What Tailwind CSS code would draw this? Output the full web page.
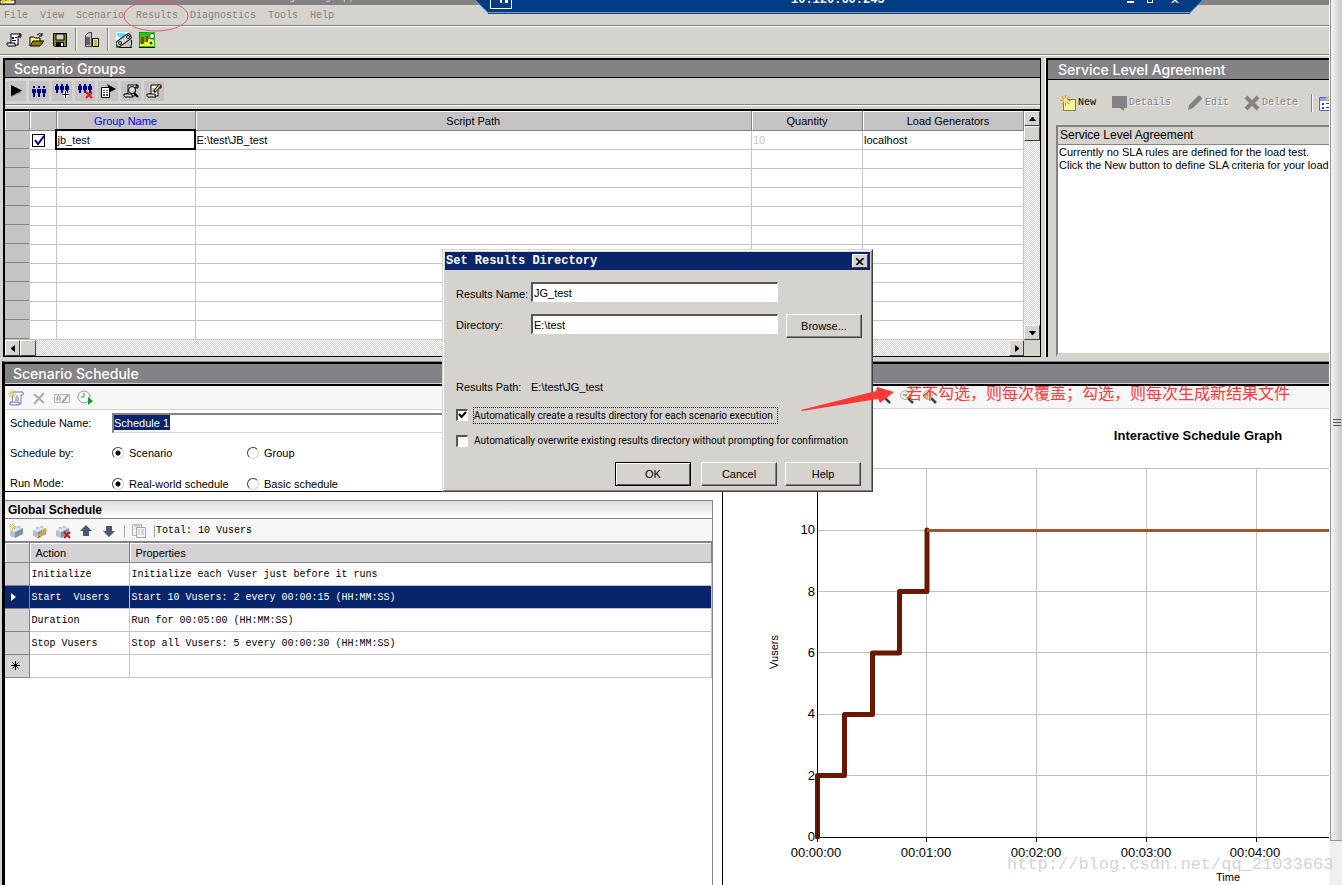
<!DOCTYPE html>
<html lang="en">
<head>
<meta charset="utf-8">
<title>Controller - Set Results Directory</title>
<script src="https://cdn.jsdelivr.net/npm/@tailwindcss/browser@4"></script>
</head>
<body class="h-screen overflow-hidden bg-[#d6d3ce] font-['Liberation_Sans',sans-serif] text-[11px] leading-4 text-black">
<svg class="hidden" aria-hidden="true">
  <symbol id="men" viewBox="0 0 16 16"><path d="M2 3h2v2H2zM1 6h4v4H4v4H2v-4H1zM7 3h2v2H7zM6 6h4v4H9v4H7v-4H6zM12 3h2v2h-2zM11 6h4v4h-1v4h-2v-4h-1z" fill="#000084"/></symbol>
  <symbol id="men-small" viewBox="0 0 16 16"><path d="M2 1h2v2H2zM1 3h4v4H4v3H2V7H1zM7 1h2v2H7zM6 3h4v4H9v3H7V7H6zM12 1h2v2h-2zM11 3h4v4h-1v3h-2V7h-1z" fill="#000084"/></symbol>
  <symbol id="scroll" viewBox="0 0 16 16"><path d="M5 2h9v2h-2v9H3V11h2z" fill="#fff" stroke="#000"/><path d="M1 11h8v2l1 1H2l-1-1z" fill="#dedede" stroke="#000"/><path d="M13 2h2v3h-2" fill="none" stroke="#000"/></symbol>
  <symbol id="block" viewBox="0 0 16 16"><path d="M1 7l8-4 5 2-8 4z" fill="#dfe6ee"/><path d="M1 7l5 2v6l-5-2z" fill="#b5c0ce"/><path d="M6 9l8-4v6l-8 4z" fill="#8493ab"/><ellipse cx="5.500" cy="5" rx="2" ry="1.200" fill="#c4cedb"/><ellipse cx="9.500" cy="4" rx="2" ry="1.200" fill="#c4cedb"/></symbol>
  <symbol id="spark" viewBox="0 0 10 10"><path d="M5 0v10M0 5h10M1.500 1.500l7 7M8.500 1.500l-7 7" stroke="#d99c2b"/><circle cx="5" cy="5" r="2" fill="#ffe27a"/></symbol>
  <symbol id="glass" viewBox="0 0 16 16"><path d="M9 9l5 5" stroke="#39424f" stroke-width="2.500"/><circle cx="6" cy="6" r="4.500" fill="#f3efd7" stroke="#a9adb3"/></symbol>
</svg>

<div class="relative flex h-full overflow-hidden">
  <main class="flex min-w-0 flex-1 flex-col overflow-hidden">
    <div class="flex h-[5px] shrink-0 items-end overflow-hidden bg-[#848284] text-[#d6d3ce]">
      <svg class="h-[5px] w-4" viewBox="0 0 16 5"><path d="M0 0h15v4H0z" fill="#fff" stroke="#000"/><path d="M2 0h3v3H2zM7 0h4v2H7z" fill="#f0d800"/></svg>
      <span class="ml-[273px] h-3 font-['Liberation_Mono',monospace] text-[10px] leading-[10px] whitespace-pre">g     g  p,</span>
    </div>

    <nav class="flex h-[22px] shrink-0 gap-3 border-b border-white pl-1 font-['Liberation_Mono',monospace] text-[10px] leading-[21px] text-[#848284] shadow-[inset_0_-1px_0_#848284]">
      <button>File</button><button>View</button><button>Scenario</button><button>Results</button><button>Diagnostics</button><button>Tools</button><button>Help</button>
    </nav>

    <div class="flex h-7 shrink-0 items-center gap-[7px] border-b border-[#848284] pb-[2px] pl-[6px] shadow-[0_1px_0_#fff]" role="toolbar" aria-label="File tools">
      <button aria-label="New scenario"><svg class="size-4" viewBox="0 0 16 16"><use href="#scroll"/><path d="M6 5h2v2H6zM9 5h2v1H9zM6 8h4v1H6z" fill="#000084"/></svg></button>
      <button aria-label="Open"><svg class="size-4" viewBox="0 0 16 16"><path d="M1 14V5h4l1 1h5v3" fill="#ffff84" stroke="#000"/><path d="M1 14l3-5h11l-4 5z" fill="#848200" stroke="#000"/><path d="M8 3q3-3 5 0m0-2v3h-3" fill="none" stroke="#000"/></svg></button>
      <button aria-label="Save"><svg class="size-4" viewBox="0 0 16 16"><path d="M1.500 1.500h13v13h-12l-1-1z" fill="#848200" stroke="#000"/><path d="M4 2h8v6H4z" fill="#d6d3ce" stroke="#000"/><path d="M4 10h8v4H4z" fill="#000"/><path d="M9 11h2v3H9z" fill="#fff"/></svg></button>
      <span class="h-[23px] w-[2px] border-r border-[#fff] bg-[#848284]"></span>
      <button aria-label="Load generators"><svg class="size-4" viewBox="0 0 16 16"><path d="M1.500 3.500l3-3h3v14h-6z" fill="#c6c3c6" stroke="#424142"/><path d="M2 6h4M2 8h4M2 10h4M2 12h4" stroke="#000"/><path d="M8.500 6.500h6v8h-6z" fill="#ffff30" stroke="#000"/><path d="M10 9h3M10 11h3M10 13h3" stroke="#848200"/></svg></button>
      <span class="h-[23px] w-[2px] border-r border-[#fff] bg-[#848284]"></span>
      <button aria-label="Design"><svg class="size-4" viewBox="0 0 16 16"><path d="M0 0h16v16H0z" fill="#c6c3c6"/><path d="M0 0h13L0 11z" fill="#fff"/><path d="M1 1h8v2L6 6 1 4z" fill="#5bdcff"/><path d="M3 11.500L12 5" stroke="#000" stroke-width="7" stroke-linecap="round"/><path d="M3 11.500L12 5" stroke="#d6d3ce" stroke-width="5" stroke-linecap="round"/><circle cx="12" cy="5" r="1.500" fill="#fff" stroke="#000"/><circle cx="4" cy="11" r="1.500" fill="#fff" stroke="#000"/><path d="M0 15.500h16M15.500 8v8" stroke="#000"/><path d="M0 14h1v1h2v1H0zM14 13h2v2h-2z" fill="#00a651"/></svg></button>
      <button aria-label="Run"><svg class="size-4" viewBox="0 0 16 16"><path d="M0 0h16v16H0z" fill="#10d010"/><path d="M0 15V0h9" fill="none" stroke="#007500"/><path d="M1 12l5-2 4-3 5 1v6H1z" fill="#ffff20"/><path d="M2 5h3v7H2zM7 4h2v6H7z" fill="#e01818"/><circle cx="13" cy="4" r="2.500" fill="#fff" stroke="#555"/><circle cx="12" cy="11" r="1.500" fill="#1030ff"/><path d="M0 15.500h16" stroke="#000"/></svg></button>
    </div>

    <!-- Groups and service level agreement -->
    <div class="flex h-[302px] shrink-0 gap-1 pt-[3px] pl-[3px]">
      <section class="flex min-w-0 flex-1 flex-col border-2 border-r border-b border-black bg-[#d6d3ce]">
        <h2 class="h-[18px] shrink-0 border-b border-black bg-[#848284] pl-[9px] font-[Inter,sans-serif] text-[14px] leading-[18px] font-medium text-white">Scenario Groups</h2>
        <div class="flex h-[27px] shrink-0 items-center gap-[3px] border-b border-[#848284] pl-px shadow-[0_1px_0_#fff]" role="toolbar" aria-label="Group tools">
          <button aria-label="Start" class="bg-[#c6c3c6] p-[2px]"><svg class="size-4" viewBox="0 0 16 16"><path d="M3 3v11l11-5z" fill="#848284"/><path d="M3 2v11l11-5.500z"/></svg></button>
          <button aria-label="Vusers" class="bg-[#c6c3c6] p-[2px]"><svg class="size-4" viewBox="0 0 16 16"><use href="#men"/></svg></button>
          <button aria-label="Add group" class="bg-[#c6c3c6] p-[2px]"><svg class="size-4" viewBox="0 0 16 16"><use href="#men-small"/><path d="M11.500 8v7M8 11.500h7" stroke="#fff" stroke-width="3"/><path d="M11.500 8v7M8 11.500h7" stroke="#000084"/></svg></button>
          <button aria-label="Remove group" class="bg-[#c6c3c6] p-[2px]"><svg class="size-4" viewBox="0 0 16 16"><use href="#men-small"/><path d="M9 9l6 6m0-6l-6 6" stroke="#e71818" stroke-width="2"/></svg></button>
          <button aria-label="Run-time settings" class="bg-[#c6c3c6] p-[2px]"><svg class="size-4" viewBox="0 0 16 16"><path d="M7 1l9 5-6 3z"/><path d="M1.500 4.500h8v10h-8z" fill="#fff" stroke="#000"/><path d="M3 7h2v1H3zM6 7h2v1H6zM3 9h2v1H3zM6 9h2v1H6zM3 11h2v2H3zM6 11h2v2H6z" fill="#555"/></svg></button>
          <button aria-label="Details" class="bg-[#c6c3c6] p-[2px]"><svg class="size-4" viewBox="0 0 16 16"><use href="#scroll"/><circle cx="9" cy="7" r="3.500" fill="#dedede" stroke="#000"/><path d="M11 10l4 4" stroke="#000" stroke-width="2"/></svg></button>
          <button aria-label="View script" class="bg-[#c6c3c6] p-[2px]"><svg class="size-4" viewBox="0 0 16 16"><use href="#scroll"/><path d="M8 9l6-7" stroke="#000" stroke-width="3"/><path d="M9 8l5-6" stroke="#ffd84a" stroke-width="1.500"/><path d="M13.500 2.500l1-1" stroke="#e71818" stroke-width="2"/><path d="M6 6h3M6 8h2" stroke="#848284"/></svg></button>
        </div>
        <div class="mt-1 grid min-h-0 flex-1 grid-cols-[minmax(0,1fr)_16px] grid-rows-[minmax(0,1fr)_16px] border-t-2 border-black">
          <div class="overflow-hidden bg-white">
            <table class="w-full table-fixed border-collapse">
              <colgroup><col class="w-[24px]"><col class="w-[27px]"><col class="w-[139px]"><col><col class="w-[111px]"><col class="w-[161px]"></colgroup>
              <thead>
                <tr class="h-[19px] bg-[#c6c3c6] [&>th]:border-r [&>th]:border-b [&>th]:border-[#848284] [&>th]:pt-[2px] [&>th]:pb-0 [&>th]:pr-0 [&>th]:font-normal [&>th]:shadow-[inset_1px_1px_0_#fff]">
                  <th></th><th></th><th class="text-[#0000f0]">Group Name</th><th>Script Path</th><th>Quantity</th><th class="pl-[10px]">Load Generators</th>
                </tr>
              </thead>
              <tbody id="groups">
                <tr class="h-[19px] [&>td]:border-r [&>td]:border-b [&>td]:border-[#c6c3c6] [&>td]:pt-px [&>td]:pb-0 [&>td]:pr-0 [&>td]:pl-px [&>td]:leading-[17px]">
                  <td class="bg-[#c6c3c6] shadow-[inset_0_-1px_0_#848284]"></td>
                  <td><span class="relative ml-px block size-[13px]"><input type="checkbox" checked aria-label="Enable jb_test" class="block size-[13px] appearance-none border border-black bg-white"><svg class="pointer-events-none absolute inset-0 size-[13px]" viewBox="0 0 13 13"><path d="M3 6l3 4 6-8" fill="none" stroke="#0000a0" stroke-width="2"/></svg></span></td>
                  <td class="outline-2 -outline-offset-1 outline-black">jb_test</td><td>E:\test\JB_test</td><td class="text-[#c6c3c6]">10</td><td>localhost</td>
                </tr>
              </tbody>
            </table>
          </div>
          <div class="flex flex-col bg-[repeating-conic-gradient(#fff_0_25%,#d6d3ce_0_50%)] bg-[length:2px_2px]">
            <button aria-label="Scroll up" class="flex h-[15px] items-center justify-center border border-t-white border-r-[#424142] border-b-[#424142] border-l-white bg-[#d6d3ce]"><svg class="h-1 w-[7px]" viewBox="0 0 7 4"><path d="M3 0h1l3 4H0z"/></svg></button>
            <span class="h-[15px] border border-t-white border-r-[#424142] border-b-[#424142] border-l-white bg-[#d6d3ce]"></span>
            <button aria-label="Scroll down" class="mt-auto flex h-[15px] items-center justify-center border border-t-white border-r-[#424142] border-b-[#424142] border-l-white bg-[#d6d3ce]"><svg class="h-1 w-[7px]" viewBox="0 0 7 4"><path d="M0 0h7L4 4H3z"/></svg></button>
          </div>
          <div class="flex bg-[repeating-conic-gradient(#fff_0_25%,#d6d3ce_0_50%)] bg-[length:2px_2px]">
            <button aria-label="Scroll left" class="flex w-[15px] items-center justify-center border border-t-white border-r-[#424142] border-b-[#424142] border-l-white bg-[#d6d3ce]"><svg class="h-[7px] w-1" viewBox="0 0 4 7"><path d="M4 0v7L0 4V3z"/></svg></button>
            <span class="w-4 border border-t-white border-r-[#424142] border-b-[#424142] border-l-white bg-[#d6d3ce]"></span>
            <button aria-label="Scroll right" class="ml-auto flex w-[15px] items-center justify-center border border-t-white border-r-[#424142] border-b-[#424142] border-l-white bg-[#d6d3ce]"><svg class="h-[7px] w-1" viewBox="0 0 4 7"><path d="M0 0v7l4-3V3z"/></svg></button>
          </div>
          <div></div>
        </div>
      </section>

      <section class="flex w-[284px] shrink-0 flex-col border-l border-white">
        <div class="flex min-h-0 flex-1 flex-col border-t-2 border-l-2 border-black">
        <h2 class="h-5 shrink-0 border-b border-black bg-[#848284] pl-[10px] font-[Inter,sans-serif] text-[14px] leading-[20px] font-medium text-white">Service Level Agreement</h2>
        <div class="flex h-[45px] shrink-0 items-center overflow-hidden pt-px pl-[12px] font-['Liberation_Mono',monospace] text-[10px] whitespace-nowrap text-[#848284]">
          <button class="flex items-center gap-[2px] text-black"><svg class="size-4" viewBox="0 0 16 16"><path d="M3.500 4.500h12v11h-12z" fill="#f7f3a5" stroke="#848230"/><use href="#spark" width="11" height="11"/></svg>New</button>
          <button disabled class="ml-[15px] flex items-center gap-[2px]"><svg class="size-4" viewBox="0 0 16 16"><path d="M1 1h15v12h-3v3l-4-3H1z" fill="#848284"/></svg><span class="[text-shadow:1px_1px_0_#fff]">Details</span></button>
          <button disabled class="ml-4 flex items-center gap-[2px]"><svg class="size-4" viewBox="0 0 16 16"><path d="M1 15l1-5 9-9q3-1 4 3l-9 9z" fill="#848284"/></svg><span class="[text-shadow:1px_1px_0_#fff]">Edit</span></button>
          <button disabled class="ml-[15px] flex items-center gap-[2px]"><svg class="size-4" viewBox="0 0 16 16"><path d="M2 2l12 12M14 2L2 14" stroke="#848284" stroke-width="4"/></svg><span class="[text-shadow:1px_1px_0_#fff]">Delete</span></button>
          <span class="ml-[13px] h-[18px] w-[2px] shrink-0 border-r border-white bg-[#848284]"></span>
          <button aria-label="Options" class="ml-[6px] shrink-0"><svg class="size-4" viewBox="0 0 16 16"><path d="M.5 2.500h15v13H.5z" fill="#fff" stroke="#5a65c8"/><path d="M1 3h14v3H1z" fill="#8c9cf0"/><path d="M3 8h2v2H3zM7 8h4v1H7zM3 12h2v2H3zM7 12h4v1H7z" fill="#303cc0"/><path d="M5 5l6-5v5z" fill="#d6c27a"/></svg></button>
        </div>
        <div class="ml-2 flex min-h-0 flex-1 flex-col border-t-2 border-b-4 border-l-2 border-t-[#848284] border-b-[#d6d3ce] border-l-[#848284] bg-white">
          <h3 class="h-[18px] shrink-0 overflow-hidden border-b border-[#848284] bg-[#d6d3ce] pl-[2px] text-[12px] leading-[17px] whitespace-nowrap">Service Level Agreement</h3>
          <p class="overflow-hidden pt-px pl-px leading-[13px] whitespace-nowrap">Currently no SLA rules are defined for the load test.<br>Click the New button to define SLA criteria for your load</p>
        </div>
        </div>
      </section>
    </div>

    <!-- Scenario schedule -->
    <section class="mt-[4px] ml-[2px] flex min-h-0 flex-1 flex-col border-t border-l-2 border-t-[#848284] border-l-black">
      <h2 class="h-[23px] shrink-0 border-t-2 border-b border-l border-black bg-[#848284] pl-[8px] font-[Inter,sans-serif] text-[14px] leading-[20px] font-medium text-white shadow-[inset_0_-1px_0_#d6d3ce]">Scenario Schedule</h2>
      <div class="flex min-h-0 flex-1 border-t border-l border-black bg-white">
        <div class="flex w-[717px] shrink-0 flex-col">
          <div class="flex h-[24px] shrink-0 items-center gap-[7px] border-b border-[#d6d3ce] bg-[#f7f7f7] pl-[3px]" role="toolbar" aria-label="Schedule tools">
            <button aria-label="New schedule"><svg class="size-4" viewBox="0 0 16 16"><path d="M5 2h10v3h-2v9H4z" fill="#fff" stroke="#6a7aa0"/><path d="M2 12h9v3H2z" fill="#e4e9f3" stroke="#6a7aa0"/><path d="M7 8h4M7 10h4M8 6h2" stroke="#6a7aa0"/><use href="#spark" width="8" height="8"/></svg></button>
            <button aria-label="Delete schedule"><svg class="size-4" viewBox="0 0 16 16"><path d="M3 4l10 9M13 3L3 14" stroke="#b0adb0" stroke-width="2"/></svg></button>
            <button aria-label="Rename schedule"><svg class="size-4" viewBox="0 0 16 16"><path d="M.5 4.500h15v8H.5z" fill="#eee" stroke="#b5b5b5"/><path d="M3 11V7q1.500-2 3 0v4M3 9h3" fill="none" stroke="#a0a0a0"/><path d="M8 13l6-8" stroke="#a5a5a5" stroke-width="2"/></svg></button>
            <button aria-label="Start time"><svg class="size-4" viewBox="0 0 16 16"><circle cx="7" cy="7" r="6" fill="#f7fafd" stroke="#8c98ad"/><path d="M7 3v4H4" fill="none" stroke="#8a6d20"/><path d="M11 7v8l5-4z" fill="#149c28"/></svg></button>
          </div>
          <form class="grid h-[82px] shrink-0 grid-cols-[102px_135px_1fr] grid-rows-[26px_34px_28px] content-start overflow-hidden border-b border-black pl-[5px]" onsubmit="return false">
            <label for="sname" class="pt-[5px]">Schedule Name:</label>
            <div class="col-span-2 mt-[3px] h-5 border-t-2 border-b border-l-2 border-t-[#848284] border-b-[#d6d3ce] border-l-[#848284]"><input id="sname" value="Schedule 1" class="block h-[15px] w-[56px] bg-[#08246b] text-white outline-none"></div>
            <span class="pt-[9px]">Schedule by:</span>
            <label class="flex items-center gap-[5px]"><input type="radio" name="by" checked class="size-3 appearance-none rounded-full border border-t-[#424142] border-r-[#d6d3ce] border-b-[#d6d3ce] border-l-[#424142] bg-[radial-gradient(circle,#000_2px,#fff_3px)]">Scenario</label>
            <label class="flex items-center gap-[5px]"><input type="radio" name="by" class="size-3 appearance-none rounded-full border border-t-[#424142] border-r-[#d6d3ce] border-b-[#d6d3ce] border-l-[#424142]">Group</label>
            <span class="pt-[5px]">Run Mode:</span>
            <label class="flex items-center gap-[5px]"><input type="radio" name="mode" checked class="size-3 appearance-none rounded-full border border-t-[#424142] border-r-[#d6d3ce] border-b-[#d6d3ce] border-l-[#424142] bg-[radial-gradient(circle,#000_2px,#fff_3px)]">Real-world schedule</label>
            <label class="flex items-center gap-[5px]"><input type="radio" name="mode" class="size-3 appearance-none rounded-full border border-t-[#424142] border-r-[#d6d3ce] border-b-[#d6d3ce] border-l-[#424142]">Basic schedule</label>
          </form>
          <div class="mt-2 mr-[9px] flex min-h-0 flex-1 flex-col border-t border-r border-[#848284]">
            <h3 class="h-[18px] shrink-0 border-b border-[#848284] bg-linear-to-b from-[#dedbde] to-white pl-[3px] text-[12px] font-bold leading-[18px]">Global Schedule</h3>
            <div class="flex h-[24px] shrink-0 items-center gap-[7px] border-b-2 border-[#848284] bg-[#f7f7f7] pt-px pl-[4px] font-['Liberation_Mono',monospace] text-[10px]" role="toolbar" aria-label="Action tools">
              <button aria-label="Add action"><svg class="size-4" viewBox="0 0 16 16"><use href="#block"/><use href="#spark" width="7" height="7"/></svg></button>
              <button aria-label="Edit action"><svg class="size-4" viewBox="0 0 16 16"><use href="#block"/><path d="M7 14l7-8" stroke="#e5a532" stroke-width="3"/><path d="M6 15l2-2" stroke="#8a5a10"/></svg></button>
              <button aria-label="Delete action"><svg class="size-4" viewBox="0 0 16 16"><use href="#block"/><path d="M9 9l6 6m0-6l-6 6" stroke="#c01828" stroke-width="2"/></svg></button>
              <button aria-label="Move up"><svg class="size-4" viewBox="0 0 16 16"><path d="M8 2l6 6h-3v5H5V8H2z" fill="#4a5870"/></svg></button>
              <button aria-label="Move down"><svg class="size-4" viewBox="0 0 16 16"><path d="M8 14l6-6h-3V3H5v5H2z" fill="#4a5870"/></svg></button>
              <span class="h-3 w-px bg-[#a5a2a5]"></span>
              <button aria-label="Copy" class="-ml-px"><svg class="size-4" viewBox="0 0 16 16"><path d="M1.500 1.500h9v11h-9z" fill="#eee" stroke="#b5b5b5"/><path d="M5.500 4.500h9v10h-9z" fill="#f5f5f5" stroke="#a5a5a5"/><path d="M7 7h2M10 7h3M7 9h2M10 9h3M7 11h2M10 11h3M3 3h6" stroke="#b0b0b0"/></svg></button>
              <span class="h-3 w-px bg-[#a5a2a5]"></span>
              <span class="-ml-[6px]">Total: 10 Vusers</span>
            </div>
            <table class="w-full table-fixed border-collapse font-['Liberation_Mono',monospace] text-[10px] whitespace-pre">
              <colgroup><col class="w-[24px]"><col class="w-[100px]"><col></colgroup>
              <thead>
                <tr class="h-[19px] bg-[#d6d3d6] text-left font-['Liberation_Sans',sans-serif] text-[11px] [&>th]:border-r [&>th]:border-b [&>th]:border-[#848284] [&>th]:pt-[2px] [&>th]:pb-0 [&>th]:font-normal [&>th]:shadow-[inset_1px_1px_0_#fff]"><th></th><th class="pl-[6px]">Action</th><th class="pl-[6px]">Properties</th></tr>
              </thead>
              <tbody class="[&_td]:border-r [&_td]:border-b [&_td]:border-[#c6c3c6] [&_td]:pt-[2px] [&_td]:pb-0 [&_td]:pl-[2px] [&_th]:border-r [&_th]:border-b [&_th]:border-[#848284] [&_th]:p-0">
                <tr class="h-[23px]"><th class="bg-[#d6d3d6]"></th><td>Initialize</td><td>Initialize each Vuser just before it runs</td></tr>
                <tr class="h-[23px] bg-[#08246b] text-white"><th><svg class="ml-[6px] h-2 w-[5px]" viewBox="0 0 5 8"><path d="M0 0v8l5-4z" fill="#fff"/></svg></th><td>Start  Vusers</td><td>Start 10 Vusers: 2 every 00:00:15 (HH:MM:SS)</td></tr>
                <tr class="h-[23px]"><th class="bg-[#d6d3d6]"></th><td>Duration</td><td>Run for 00:05:00 (HH:MM:SS)</td></tr>
                <tr class="h-[23px]"><th class="bg-[#d6d3d6]"></th><td>Stop Vusers</td><td>Stop all Vusers: 5 every 00:00:30 (HH:MM:SS)</td></tr>
                <tr class="h-[23px]"><th class="bg-[#d6d3d6]"><svg class="ml-[6px] size-[9px]" viewBox="0 0 9 9"><path d="M4.500 0v9M0 4.500h9M1.500 1.500l6 6M7.500 1.500l-6 6" stroke="#000"/></svg></th><td></td><td></td></tr>
              </tbody>
            </table>
          </div>
        </div>
        <div class="flex min-w-0 flex-1 flex-col border-l border-black">
          <div class="flex h-[23px] shrink-0 items-center gap-[7px] border-b border-[#d6d3ce] bg-[#f7f7f7] pl-[153px]" role="toolbar" aria-label="Graph tools">
            <button aria-label="Zoom in"><svg class="size-4" viewBox="0 0 16 16"><use href="#glass"/></svg></button>
            <button aria-label="Zoom out"><svg class="size-4" viewBox="0 0 16 16"><use href="#glass"/><path d="M4 6h4" stroke="#6b5a20"/></svg></button>
            <button aria-label="Zoom reset"><svg class="size-4" viewBox="0 0 16 16"><use href="#glass"/><path d="M3 5h3v2H3v2h3M8 3v6" fill="none" stroke="#b08a20"/></svg></button>
          </div>
          <div class="min-h-0 flex-1 overflow-hidden">
            <svg class="h-[476px] w-[606px]" viewBox="723 409 606 476" role="img" aria-label="Interactive Schedule Graph">
              <path d="M817 468.500H1329M817 530.500H1329M817 591.500H1329M817 652.500H1329M817 714.500H1329M817 775.500H1329M926.500 468V837M1036.500 468V837M1146.500 468V837M1256.500 468V837" stroke="#c0c0c0" fill="none"/>
              <path d="M817.500 468V842M817 837.500H1329M926.500 837v5M1036.500 837v5M1146.500 837v5M1256.500 837v5" stroke="#000" fill="none"/>
              <path d="M817.500 837V775.500H844.500V714.500H872.500V653H899.500V591.500H927V530" fill="none" stroke="#6b1800" stroke-width="5" stroke-linejoin="round" stroke-linecap="round"/>
              <path d="M927 530.500H1329" stroke="#a5522f" stroke-width="3"/>
              <path d="M817.500 780V837" stroke="#000"/>
              <g class="text-[13px]" text-anchor="middle"><text x="816" y="857">00:00:00</text><text x="926" y="857">00:01:00</text><text x="1036" y="857">00:02:00</text><text x="1146" y="857">00:03:00</text><text x="1255" y="857">00:04:00</text></g>
              <g class="text-[13px]" text-anchor="end"><text x="815" y="534">10</text><text x="815" y="596">8</text><text x="815" y="657">6</text><text x="815" y="718">4</text><text x="815" y="780">2</text><text x="815" y="841">0</text></g>
              <text class="text-[13px] font-bold" x="1198" y="440" text-anchor="middle">Interactive Schedule Graph</text>
              <text class="text-[11px]" x="1228" y="881" text-anchor="middle">Time</text>
              <text class="text-[11px]" transform="translate(778 652) rotate(-90)" text-anchor="middle">Vusers</text>
            </svg>
          </div>
        </div>
      </div>
    </section>
  </main>

  <!-- Outer window scrollbar -->
  <aside class="flex w-[13px] shrink-0 flex-col border-l border-white bg-[#efefef]">
    <div class="mb-[44px] flex flex-1 items-center justify-center border-b border-l border-[#949294] bg-linear-to-r from-[#f5f5f5] to-[#c8c8cc] pt-1">
      <svg class="h-[9px] w-2" viewBox="0 0 8 9"><path d="M0 1.500h8M0 4.500h8M0 7.500h8" stroke="#555"/></svg>
    </div>
  </aside>

  <!-- Remote connection bar -->
  <div class="absolute top-0 left-[475px] h-[14px] w-[729px] overflow-hidden">
    <svg class="absolute inset-0 h-[14px] w-[729px]" viewBox="0 0 729 14"><path d="M0 0l13 13h702l13-13z" fill="#003c84"/><path d="M0 0l13 12.500h702l13-12.500" fill="none" stroke="#6b9ad6"/><path d="M13 13.500h702" stroke="#31415a"/><path d="M15.500 0v8.500h21V0" fill="none" stroke="#fff"/><path d="M25 0h2v3h-2zM30 0h3v3h-3zM652 1h7v2h-7zM672 0h1v3h-1zM677 0h1v3h-1zM672 2h6v1h-6zM696 3l3-3h2l3 3h-2l-2-2-2 2z" fill="#fff"/></svg>
    <span class="absolute -top-[6px] left-[316px] font-['Liberation_Mono',monospace] text-[12px] leading-3 font-bold text-white">10.120.60.245</span>
  </div>

  <svg class="pointer-events-none absolute top-0 left-[121px] h-8 w-[70px]" viewBox="0 0 70 32"><ellipse cx="35" cy="16" rx="32" ry="15" fill="none" stroke="#e06060"/></svg>

  <!-- Dialog -->
  <div role="dialog" aria-labelledby="dlg" class="absolute top-[249px] left-[442px] w-[431px] border border-t-[#d6d3ce] border-r-[#424142] border-b-[#424142] border-l-[#d6d3ce]">
    <div class="border border-t-white border-r-[#848284] border-b-[#848284] border-l-white bg-[#d6d3ce] p-px pb-1">
      <div class="flex h-[18px] items-center justify-between bg-[#08246b] pr-[2px] pl-px text-white">
        <h2 id="dlg" class="font-['Liberation_Mono',monospace] text-[12px] leading-[18px] font-bold">Set Results Directory</h2>
        <button aria-label="Close" class="flex h-[14px] w-4 items-center justify-center border border-t-white border-r-[#424142] border-b-[#424142] border-l-white bg-[#d6d3ce]"><svg class="h-[7px] w-2" viewBox="0 0 8 7"><path d="M0 0l7 7M7.500 0l-7 7" stroke="#000" stroke-width="1.600"/></svg></button>
      </div>
      <form class="px-[9px] pl-[11px]" onsubmit="return false">
        <div class="mt-3 grid grid-cols-[75px_247px_76px] gap-y-[12px] [&>label]:whitespace-nowrap">
          <label for="rname" class="pt-[4px]">Results Name:</label>
          <input id="rname" value="JG_test" class="h-[20px] w-[247px] border-t-2 border-r border-b border-l-2 border-t-[#555] border-r-white border-b-white border-l-[#555] bg-white pl-px outline-none">
          <span></span>
          <label for="dir" class="pt-[3px]">Directory:</label>
          <input id="dir" value="E:\test" class="h-[20px] w-[247px] border-t-2 border-r border-b border-l-2 border-t-[#555] border-r-white border-b-white border-l-[#555] bg-white pl-px outline-none">
          <button class="ml-[8px] h-6 w-[76px] border border-t-white border-r-[#424142] border-b-[#424142] border-l-white shadow-[inset_-1px_-1px_0_#848284]">Browse...</button>
        </div>
        <div class="mt-[41px] flex"><span class="w-[75px]">Results Path:</span><output>E:\test\JG_test</output></div>
        <label class="mt-[12px] flex h-4 items-center gap-[5px] font-[Roboto,sans-serif] text-[10px] whitespace-nowrap"><span class="relative size-3 shrink-0"><input type="checkbox" checked class="block size-3 appearance-none border-t-2 border-r border-b border-l-2 border-t-[#555] border-r-white border-b-white border-l-[#555] bg-white"><svg class="pointer-events-none absolute inset-0 size-3" viewBox="0 0 12 12"><path d="M3 5l2.500 3L10 3" fill="none" stroke="#000" stroke-width="2"/></svg></span><span class="border border-dotted border-black pr-1 leading-[15px]">Automatically create a results directory for each scenario execution</span></label>
        <label class="mt-[10px] flex h-4 items-center gap-[6px] font-[Roboto,sans-serif] text-[10px] whitespace-nowrap"><input type="checkbox" class="block size-3 shrink-0 appearance-none border-t-2 border-r border-b border-l-2 border-t-[#555] border-r-white border-b-white border-l-[#555] bg-white"><span>Automatically overwrite existing results directory without prompting for confirmation</span></label>
        <div class="mt-[13px] flex justify-end">
          <button class="mr-[10px] h-6 w-[76px] border border-black shadow-[inset_1px_1px_0_#fff,inset_-1px_-1px_0_#555]">OK</button>
          <button class="mr-[8px] h-6 w-[76px] border border-t-white border-r-[#424142] border-b-[#424142] border-l-white shadow-[inset_-1px_-1px_0_#848284]">Cancel</button>
          <button class="h-6 w-[76px] border border-t-white border-r-[#424142] border-b-[#424142] border-l-white shadow-[inset_-1px_-1px_0_#848284]">Help</button>
        </div>
      </form>
    </div>
  </div>

  <!-- Annotation -->
  <svg class="pointer-events-none absolute top-[380px] left-[800px] h-8 w-[96px]" viewBox="800 380 96 32"><path d="M801 410l75-19 1-4 17 5-14 11-2-4-76 12z" fill="#ff3838"/></svg>
  <p class="absolute top-[380px] left-[906px] font-['Noto_Sans_CJK_SC',sans-serif] text-[16px] leading-6 whitespace-nowrap text-[#ff3838]">若不勾选，则每次覆盖；勾选，则每次生成新结果文件</p>
  <p class="pointer-events-none absolute top-[855px] left-[1007px] font-['Liberation_Mono',monospace] text-[17px] leading-5 whitespace-nowrap text-[#c8c8c8]/80">http://blog.csdn.net/qq_21033663</p>
</div>
<script>
  const body = document.getElementById('groups');
  for (let i = 0; i < 10; i++) {
    const row = document.createElement('tr');
    row.className = 'h-[19px] [&>td]:border-r [&>td]:border-b [&>td]:border-[#c6c3c6] [&>td]:p-0';
    row.innerHTML = '<td class="bg-[#c6c3c6] shadow-[inset_0_-1px_0_#848284]"></td>' + '<td></td>'.repeat(5);
    body.append(row);
  }
</script>
</body>
</html>
